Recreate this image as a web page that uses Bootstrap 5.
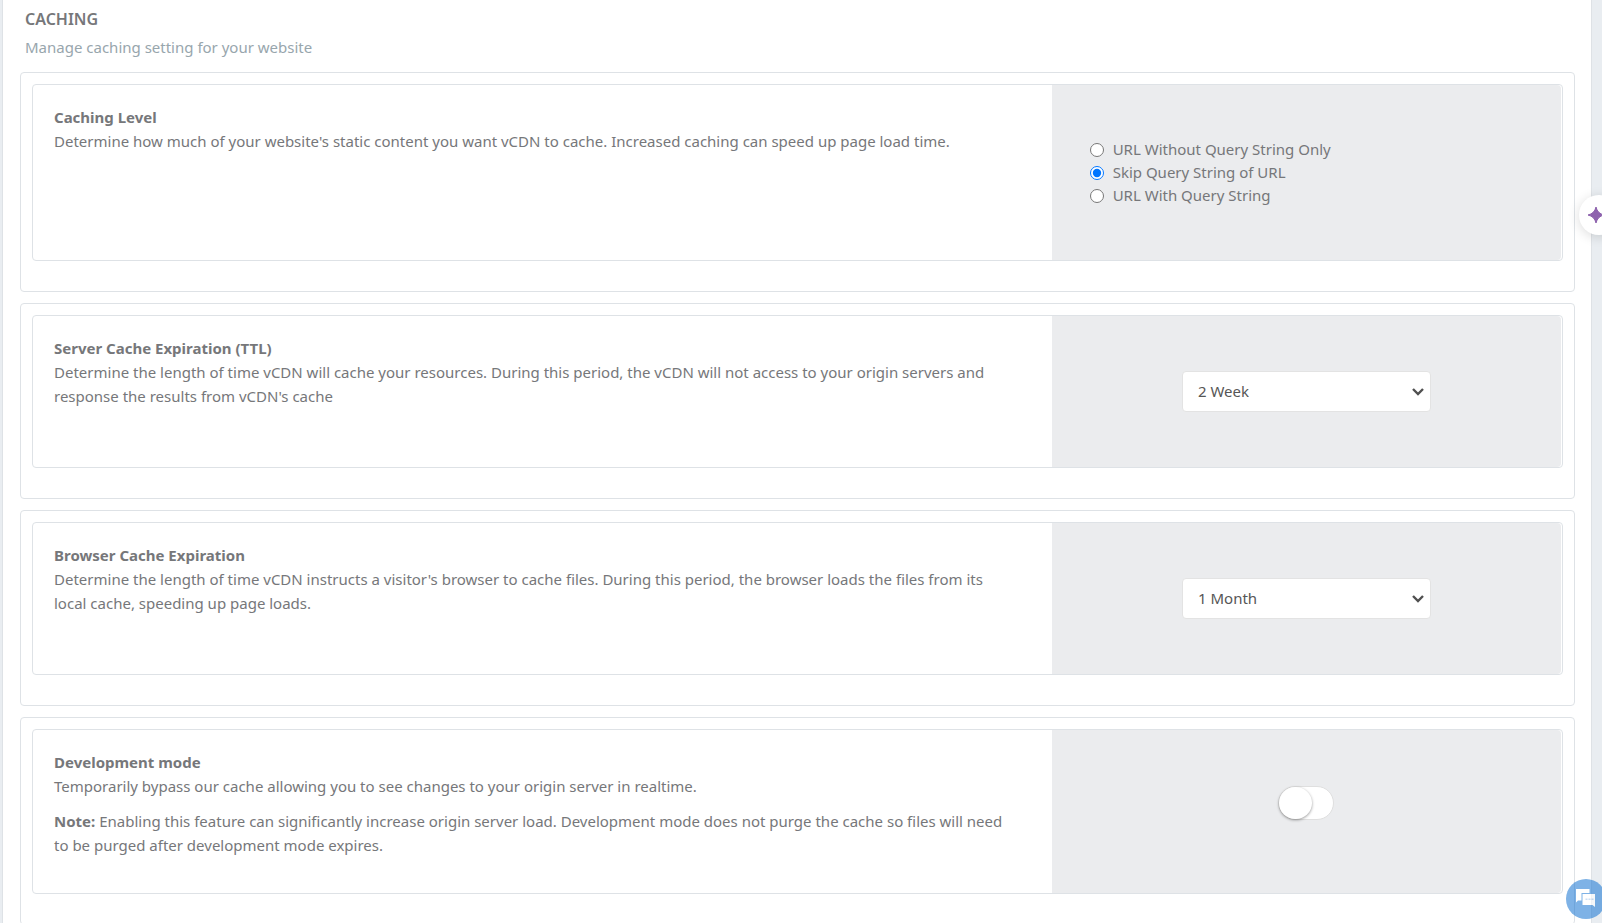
<!DOCTYPE html>
<html lang="en">
<head>
<meta charset="utf-8">
<meta name="viewport" content="width=device-width, initial-scale=1">
<title>Caching</title>
<link href="https://cdn.jsdelivr.net/npm/bootstrap@5.3.0/dist/css/bootstrap.min.css" rel="stylesheet">
<style>
  html { scrollbar-width: none; }
  html::-webkit-scrollbar { display: none; }
  body { font-family: "Noto Sans", sans-serif; font-size: 15px; line-height: 23px; color: #76777a; background: #e9edf1; }
  .page-panel { margin: 0 10px 0 2px; padding: 7px 16px 24px 17px; background: #fff; border: solid #dee2e6; border-width: 0 1px; }
  .page-title { font-size: 16px; line-height: 24px; font-weight: 600; margin: 0 5px 4px; }
  .page-intro { margin: 0 5px 13px; line-height: 24px; color: #98a6ad; }
  .setting { border: 1px solid #dee2e6; border-radius: 4px; padding: 11px 11px 30px; margin-bottom: 11px; }
  .setting-box { border: 1px solid #dee2e6; border-radius: 4px; min-height: 153px; padding-right: 1px; }
  .setting-box.tall { min-height: 177px; }
  .setting-box.medium { min-height: 165px; }
  .setting-text { padding: 21px 40px 21px 21px; }
  .setting-text h2 { font-size: 15px; line-height: 23px; font-weight: 700; margin: 0; }
  .setting-text p { line-height: 24px; margin: 0 0 11px; }
  .setting-control { background: #ebecee; border-radius: 0 4px 4px 0; padding: 0 6px; }
  .radio-list { padding-left: 38px; }
  .radio-list input { width: 14px; height: 14px; margin: 0 9px 0 0; accent-color: #0075ff; }
  .ttl-select { appearance: none; width: 50%; height: 41px; padding: 0 15px; color: #565656; border: 1px solid #e3e3e3; border-radius: 4px;
    background: #fff url("data:image/svg+xml,%3Csvg xmlns='http://www.w3.org/2000/svg' viewBox='0 0 12 8'%3E%3Cpath d='M1 1l5 5 5-5' fill='none' stroke='%23505050' stroke-width='2.4'/%3E%3C/svg%3E") no-repeat right 6px center / 12px 8px; }
  .dev-switch { appearance: none; width: 56px; height: 34px; margin: 0 0 18px; border-radius: 17px; background: #fff; border: 1px solid #dfdfdf; }
  .dev-switch::before { content: ""; display: block; width: 33px; height: 32px; border-radius: 17px; background: #fff; box-shadow: 0 1px 3px rgba(0,0,0,.4); }
  .dev-switch:checked::before { margin-left: auto; }
  .float-btn { position: fixed; border: 0; padding: 0; height: 40px; }
  .assist-btn { right: -17px; top: 195px; width: 40px; border-radius: 20px; background: #fff; box-shadow: 0 2px 12px rgba(0,0,0,.14); }
  .chat-btn { right: -4px; bottom: 4px; width: 40px; border-radius: 20px; background: #1976d2; opacity: .56; }
  .float-btn svg { display: block; }
</style>
</head>
<body>
<main class="page-panel">
  <h1 class="page-title">CACHING</h1>
  <p class="page-intro">Manage caching setting for your website</p>

  <section class="setting">
    <div class="setting-box tall d-flex">
      <div class="setting-text col-8">
        <h2>Caching Level</h2>
        <p>Determine how much of your website's static content you want vCDN to cache. Increased caching can speed up page load time.</p>
      </div>
      <div class="setting-control radio-list flex-fill d-flex flex-column justify-content-center">
        <label class="d-flex align-items-center"><input type="radio" name="level">URL Without Query String Only</label>
        <label class="d-flex align-items-center"><input type="radio" name="level" checked>Skip Query String of URL</label>
        <label class="d-flex align-items-center"><input type="radio" name="level">URL With Query String</label>
      </div>
    </div>
  </section>

  <section class="setting">
    <div class="setting-box d-flex">
      <div class="setting-text col-8">
        <h2 id="server-ttl">Server Cache Expiration (TTL)</h2>
        <p>Determine the length of time vCDN will cache your resources. During this period, the vCDN will not access to your origin servers and response the results from vCDN's cache</p>
      </div>
      <div class="setting-control flex-fill d-flex align-items-center justify-content-center">
        <select class="ttl-select" aria-labelledby="server-ttl"><option>2 Week</option></select>
      </div>
    </div>
  </section>

  <section class="setting">
    <div class="setting-box d-flex">
      <div class="setting-text col-8">
        <h2 id="browser-ttl">Browser Cache Expiration</h2>
        <p>Determine the length of time vCDN instructs a visitor's browser to cache files. During this period, the browser loads the files from its local cache, speeding up page loads.</p>
      </div>
      <div class="setting-control flex-fill d-flex align-items-center justify-content-center">
        <select class="ttl-select" aria-labelledby="browser-ttl"><option>1 Month</option></select>
      </div>
    </div>
  </section>

  <section class="setting">
    <div class="setting-box medium d-flex">
      <div class="setting-text col-8">
        <h2 id="dev-mode">Development mode</h2>
        <p>Temporarily bypass our cache allowing you to see changes to your origin server in realtime.</p>
        <p><b>Note:</b> Enabling this feature can significantly increase origin server load. Development mode does not purge the cache so files will need to be purged after development mode expires.</p>
      </div>
      <div class="setting-control flex-fill d-flex align-items-center justify-content-center">
        <input class="dev-switch" type="checkbox" role="switch" aria-labelledby="dev-mode">
      </div>
    </div>
  </section>
</main>

<button class="float-btn assist-btn" type="button" aria-label="Assistant">
  <svg width="40" height="40" viewBox="0 0 40 40"><path d="M17 12Q18.500 18.500 25 20Q18.500 21.500 17 28Q15.500 21.500 9 20Q15.500 18.500 17 12z" fill="#8e63ae" stroke="#8e63ae" stroke-linejoin="round"/></svg>
</button>
<button class="float-btn chat-btn" type="button" aria-label="Chat">
  <svg width="40" height="40" viewBox="0 0 40 40"><path d="M10 10h13.500v4H15.500v7.500H12L10 23.500z" fill="#fff"/><path d="M16.500 15H29v13l-2.500-2H16.500z" fill="#fff"/><path d="M19.500 19.500h2v1.500h-2zM22.500 19.500h2v1.500h-2zM25.500 19.500h2v1.500h-2z" fill="#1976d2" opacity=".4"/></svg>
</button>
<script src="https://cdn.jsdelivr.net/npm/bootstrap@5.3.0/dist/js/bootstrap.bundle.min.js"></script>
</body>
</html>
